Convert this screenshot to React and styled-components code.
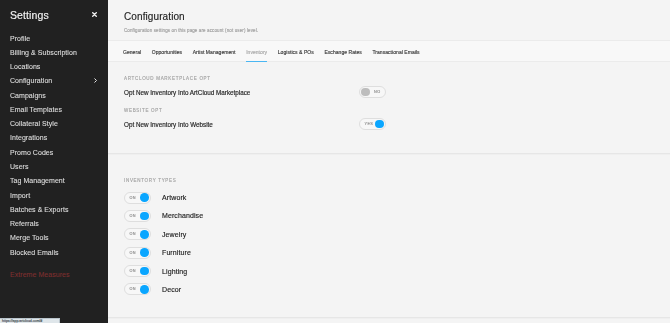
import styled, { createGlobalStyle } from 'styled-components';

const GlobalStyle = createGlobalStyle`
  html, body {
    margin: 0;
    padding: 0;
    height: 100%;
  }
  body {
    font-family: "Liberation Sans", Arial, sans-serif;
    -webkit-font-smoothing: antialiased;
    -webkit-text-stroke: 0.15px currentColor;
  }
  #root {
    height: 100%;
  }
`;

const NAV_ITEMS = [
  'Profile',
  'Billing & Subscription',
  'Locations',
  'Configuration',
  'Campaigns',
  'Email Templates',
  'Collateral Style',
  'Integrations',
  'Promo Codes',
  'Users',
  'Tag Management',
  'Import',
  'Batches & Exports',
  'Referrals',
  'Merge Tools',
  'Blocked Emails',
];

const TABS = [
  'General',
  'Opportunities',
  'Artist Management',
  'Inventory',
  'Logistics & POs',
  'Exchange Rates',
  'Transactional Emails',
];

const INVENTORY_TYPES = ['Artwork', 'Merchandise', 'Jewelry', 'Furniture', 'Lighting', 'Decor'];

// grayscale filter keeps small text from getting coloured LCD fringes
const Gray = styled.span`
  filter: grayscale(1);
`;

const Layout = styled.div`
  display: flex;
  height: 100vh;
  position: relative;
  overflow: hidden;
`;

const Sidebar = styled.aside`
  width: 108px;
  flex-shrink: 0;
  background: #212121;
  padding: 8px 11px 0 10px;
  box-sizing: border-box;
`;

const SidebarHeader = styled.div`
  display: flex;
  justify-content: space-between;
  align-items: center;
  height: 14px;
  margin-bottom: 9px;
  filter: grayscale(1);
`;

const SidebarTitle = styled.div`
  color: #f4f4f4;
  font-size: 10.5px;
  letter-spacing: 0.1px;
`;

const CloseIcon = styled.svg`
  width: 5px;
  height: 5px;
  margin-top: -1px;
`;

const NavList = styled.nav`
  display: flex;
  flex-direction: column;
`;

const NavItem = styled.div`
  display: flex;
  justify-content: space-between;
  align-items: center;
  height: 14.28px;
  font-size: 7px;
  letter-spacing: 0.05px;
  -webkit-text-stroke: 0.1px currentColor;
  color: ${({ $danger }) => ($danger ? '#7e2f2f' : '#dedede')};
  margin-top: ${({ $danger }) => ($danger ? '8.5px' : '0')};
  filter: ${({ $danger }) => ($danger ? 'none' : 'grayscale(1)')};
`;

const Chevron = styled.svg`
  width: 3px;
  height: 5px;
`;

const Main = styled.main`
  flex: 1;
  background: #f4f4f4;
  display: flex;
  flex-direction: column;
  color: #222;
`;

const Header = styled.header`
  padding: 10px 16px 6px;
  filter: grayscale(1);
`;

const PageTitle = styled.h1`
  margin: 0;
  font-weight: normal;
  font-size: 10px;
  line-height: 13px;
  letter-spacing: 0.1px;
  color: #1e1e1e;
`;

const Subtitle = styled.p`
  margin: 4px 0 0;
  font-size: 4.5px;
  line-height: 7px;
  letter-spacing: 0.12px;
  color: #a0a0a0;
`;

const TabBar = styled.div`
  display: flex;
  gap: 10.6px;
  height: 22px;
  box-sizing: border-box;
  padding: 0 16px 0 15px;
  background: #f8f8f8;
  border-top: 1px solid #ebebeb;
  border-bottom: 1px solid #ebebeb;
`;

const Tab = styled.div`
  height: 21px;
  margin-bottom: -1px;
  box-sizing: border-box;
  padding-top: 2px;
  display: flex;
  align-items: center;
  font-size: 5px;
  letter-spacing: 0.05px;
  color: ${({ $active }) => ($active ? '#a8a8a8' : '#3a3a3a')};
  border-bottom: 1.6px solid ${({ $active }) => ($active ? '#4ab6f2' : 'transparent')};
`;

const Section = styled.section`
  padding: ${({ $top }) => $top}px 16px ${({ $bottom }) => $bottom}px;
  border-bottom: 1px solid #e6e6e6;
  box-shadow: 0 1px 1px rgba(0, 0, 0, 0.02);
`;

const SectionLabel = styled.div`
  font-size: 4.5px;
  line-height: 6px;
  letter-spacing: 0.7px;
  color: #a4a4a4;
  margin-top: ${({ $gap }) => $gap || 0}px;
  filter: grayscale(1);
`;

const OptRow = styled.div`
  width: 262px;
  height: 12px;
  margin-top: 4px;
  display: flex;
  justify-content: space-between;
  align-items: center;
  font-size: 6.3px;
  color: #1e1e1e;
`;

const TypeList = styled.div`
  display: flex;
  flex-direction: column;
  gap: 6.4px;
  margin-top: 7.5px;
`;

const TypeRow = styled.div`
  display: flex;
  align-items: center;
  gap: 11px;
  height: 12px;
  font-size: 7px;
  letter-spacing: 0.1px;
  color: #1e1e1e;
`;

const Track = styled.div`
  width: 27px;
  height: 12px;
  box-sizing: border-box;
  border: 1px solid #dedede;
  border-radius: 6px;
  background: #f7f7f7;
  display: flex;
  flex-direction: ${({ $on }) => ($on ? 'row' : 'row-reverse')};
  align-items: center;
  justify-content: space-between;
  padding: ${({ $on }) => ($on ? '0 1.2px 0 4.5px' : '0 4.5px 0 1.2px')};
`;

const TrackText = styled.span`
  font-size: 3.8px;
  letter-spacing: 0.4px;
  color: #8e8e8e;
  filter: grayscale(1);
`;

const Knob = styled.span`
  width: 8.5px;
  height: 8.5px;
  border-radius: 50%;
  background: ${({ $on }) => ($on ? '#0aa6ff' : '#bdbdbd')};
`;

const StatusBubble = styled.div`
  position: absolute;
  left: 0;
  bottom: 0;
  width: 60px;
  height: 5px;
  box-sizing: border-box;
  background: #dfe6ea;
  border: 1px solid #b9c4cb;
  border-left: none;
  border-bottom: none;
  font-size: 3.5px;
  line-height: 4px;
  color: #4a5258;
  padding-left: 2px;
  overflow: hidden;
  white-space: nowrap;
`;

const Toggle = ({ on, label }) => (
  <Track $on={on}>
    <TrackText>{label}</TrackText>
    <Knob $on={on} />
  </Track>
);

export default function App() {
  return (
    <Layout>
      <GlobalStyle />
      <Sidebar>
        <SidebarHeader>
          <SidebarTitle>Settings</SidebarTitle>
          <CloseIcon viewBox="0 0 10 10">
            <path d="M1.5 1.5 L8.5 8.5 M8.5 1.5 L1.5 8.5" stroke="#f2f2f2" strokeWidth="2.6" strokeLinecap="square" />
          </CloseIcon>
        </SidebarHeader>
        <NavList>
          {NAV_ITEMS.map((item) => (
            <NavItem key={item}>
              {item}
              {item === 'Configuration' && (
                <Chevron viewBox="0 0 6 10">
                  <path d="M1 1 L5 5 L1 9" fill="none" stroke="#e6e6e6" strokeWidth="2" />
                </Chevron>
              )}
            </NavItem>
          ))}
          <NavItem $danger>Extreme Measures</NavItem>
        </NavList>
      </Sidebar>

      <Main>
        <Header>
          <PageTitle>Configuration</PageTitle>
          <Subtitle>Configuration settings on this page are account (not user) level.</Subtitle>
        </Header>
        <TabBar>
          {TABS.map((tab) => (
            <Tab key={tab} $active={tab === 'Inventory'}>
              <Gray>{tab}</Gray>
            </Tab>
          ))}
        </TabBar>

        <Section $top={14} $bottom={23}>
          <SectionLabel>ARTCLOUD MARKETPLACE OPT</SectionLabel>
          <OptRow>
            <Gray>Opt New Inventory Into ArtCloud Marketplace</Gray>
            <Toggle on={false} label="NO" />
          </OptRow>
          <SectionLabel $gap={10}>WEBSITE OPT</SectionLabel>
          <OptRow>
            <Gray>Opt New Inventory Into Website</Gray>
            <Toggle on label="YES" />
          </OptRow>
        </Section>

        <Section $top={24} $bottom={21.5}>
          <SectionLabel>INVENTORY TYPES</SectionLabel>
          <TypeList>
            {INVENTORY_TYPES.map((type) => (
              <TypeRow key={type}>
                <Toggle on label="ON" />
                <Gray>{type}</Gray>
              </TypeRow>
            ))}
          </TypeList>
        </Section>
      </Main>
      <StatusBubble>https://app.artcloud.com/#</StatusBubble>
    </Layout>
  );
}
